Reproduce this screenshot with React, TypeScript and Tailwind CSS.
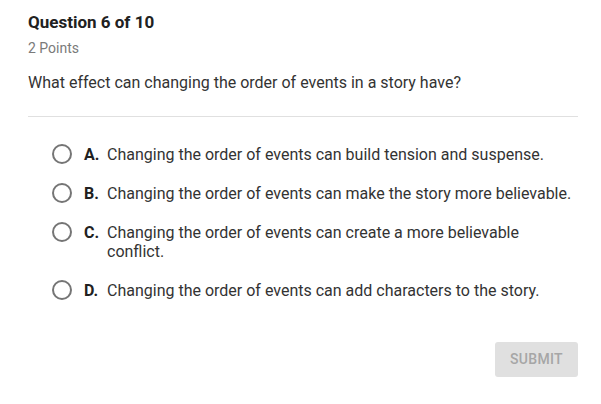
import React from "react";

const options = [
  { l: "A.", t: "Changing the order of events can build tension and suspense." },
  { l: "B.", t: "Changing the order of events can make the story more believable." },
  { l: "C.", t: "Changing the order of events can create a more believable conflict." },
  { l: "D.", t: "Changing the order of events can add characters to the story." },
];

export default function App() {
  return (
    <div className="w-[601px] h-[404px] bg-white flex flex-col" style={{ fontFamily: "Roboto, sans-serif" }}>
      <div className="px-[28px] pt-[11px]">
        <div className="text-[17px] leading-[22px] font-bold text-[#212121]">Question 6 of 10</div>
        <div className="mt-[6px] text-[14px] leading-[18px] text-[#7a7a7a]">2 Points</div>
        <div className="mt-[16px] text-[16px] leading-[20px] text-[#333333]">
          What effect can changing the order of events in a story have?
        </div>
        <div className="mt-[23px] h-px bg-[#e0e0e0] w-[550px]" />
      </div>
      <div className="pl-[52px] pr-[20px] pt-[28px] flex flex-col gap-[20px]">
        {options.map((o) => (
          <div key={o.l} className="flex items-start">
            <div className="w-[20px] h-[20px] rounded-full border-2 border-[#757575] shrink-0 mt-[-1px]" />
            <div className="ml-[12px] flex text-[16px] leading-[19px] text-[#333333]">
              <span className="font-bold w-[23px] shrink-0 text-[#212121]">{o.l}</span>
              <span className="w-[472px]">{o.t}</span>
            </div>
          </div>
        ))}
      </div>
      <div className="flex justify-end pr-[23px] mt-auto mb-[27px]">
        <button className="w-[83px] h-[35px] rounded-[3px] bg-[#e0e0e0] text-[#a6a6a6] text-[14px] font-medium tracking-[0.3px]">
          SUBMIT
        </button>
      </div>
    </div>
  );
}
